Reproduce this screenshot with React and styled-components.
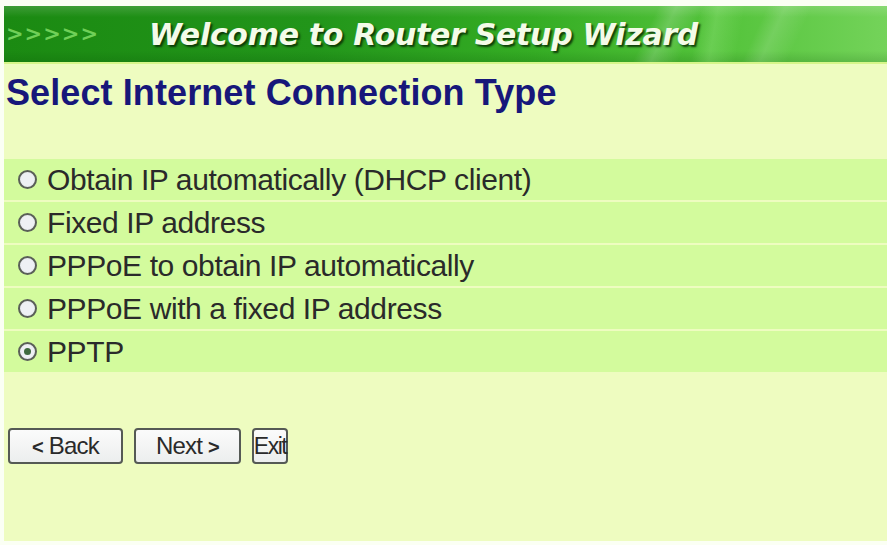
import styled, { createGlobalStyle } from "styled-components";
import { useState } from "react";

const GlobalStyle = createGlobalStyle`
  html, body {
    margin: 0;
    padding: 0;
    background: #ffffff;
  }
`;

const Page = styled.div`
  width: 887px;
  height: 545px;
  box-sizing: border-box;
  padding: 6px 0 4px 4px;
  display: flex;
  flex-direction: column;
  background: #fbfff4;
`;

const Banner = styled.div`
  height: 56px;
  display: flex;
  align-items: center;
  gap: 50px;
  padding-left: 2px;
  border-bottom: 2px solid #d6f58a;
  background:
    linear-gradient(115deg, transparent 0 72%, rgba(255,255,255,0.18) 74%, transparent 77%, transparent 84%, rgba(255,255,255,0.14) 86%, transparent 89%),
    linear-gradient(100deg, transparent 0 78%, rgba(200,255,180,0.2) 80%, transparent 83%),
    linear-gradient(180deg, rgba(255,255,255,0.15) 0, transparent 20%, transparent 80%, rgba(0,60,0,0.15) 100%),
    linear-gradient(90deg, #1b8a12 0%, #22951a 35%, #35ad24 60%, #55c43c 82%, #74d35a 100%);
`;

const Arrows = styled.span`
  font-family: "DejaVu Sans", sans-serif;
  font-weight: bold;
  font-size: 21px;
  letter-spacing: 1px;
  color: #7fdc64;
  opacity: 0.85;
`;

const BannerTitle = styled.h1`
  margin: 0;
  font-family: "DejaVu Sans", Verdana, sans-serif;
  font-style: italic;
  font-weight: bold;
  font-size: 30px;
  letter-spacing: -0.3px;
  color: #f4fbe8;
  text-shadow: 2px 2px 2px rgba(10, 50, 5, 0.9);
`;

const Content = styled.div`
  flex: 1;
  display: flex;
  flex-direction: column;
  background: #eefcc0;
`;

const Heading = styled.h2`
  margin: 0;
  padding: 8px 0 0 2px;
  height: 80px;
  box-sizing: border-box;
  font-family: "Liberation Sans", Arial, sans-serif;
  font-weight: bold;
  font-size: 36px;
  letter-spacing: 0.1px;
  color: #17177a;
`;

const Options = styled.div`
  display: flex;
  flex-direction: column;
  gap: 2px;
  padding-top: 15px;
`;

const Row = styled.label`
  height: 41px;
  display: flex;
  align-items: center;
  gap: 10px;
  padding-left: 14px;
  background: #d3fb9d;
  font-family: "Liberation Sans", Arial, sans-serif;
  font-size: 30px;
  letter-spacing: -0.4px;
  color: #2a2a2a;
  cursor: pointer;
`;

const Radio = styled.span`
  width: 15px;
  height: 15px;
  border-radius: 50%;
  border: 2px solid #5a5f58;
  background: radial-gradient(circle, #eef0f4 0 55%, #d8dde6 100%);
  display: flex;
  align-items: center;
  justify-content: center;
  flex-shrink: 0;

  &::after {
    content: "";
    width: 7px;
    height: 7px;
    border-radius: 50%;
    background: ${(p) => (p.$checked ? "#3e6a3e" : "transparent")};
  }
`;

const Buttons = styled.div`
  display: flex;
  gap: 11px;
  padding: 56px 0 0 4px;
`;

const Button = styled.button`
  height: 36px;
  padding: 0 ${(p) => p.$pad}px;
  border: 2px solid #555a55;
  border-radius: 4px;
  background: linear-gradient(180deg, #fbfbfb 0%, #eceeee 100%);
  font-family: "Liberation Sans", Arial, sans-serif;
  font-size: ${(p) => (p.$tight ? 23 : 24)}px;
  letter-spacing: ${(p) => (p.$tight ? -1.5 : -0.8)}px;
  color: #2a2a2a;
  cursor: pointer;
`;

const Chev = styled.b`
  font-size: 20px;
`;

const options = [
  "Obtain IP automatically (DHCP client)",
  "Fixed IP address",
  "PPPoE to obtain IP automatically",
  "PPPoE with a fixed IP address",
  "PPTP",
];

export default function App() {
  const [selected, setSelected] = useState(4);

  return (
    <>
      <GlobalStyle />
      <Page>
        <Banner>
          <Arrows>&gt;&gt;&gt;&gt;&gt;</Arrows>
          <BannerTitle>Welcome to Router Setup Wizard</BannerTitle>
        </Banner>
        <Content>
          <Heading>Select Internet Connection Type</Heading>
          <Options>
            {options.map((text, i) => (
              <Row key={text} onClick={() => setSelected(i)}>
                <Radio $checked={selected === i} />
                {text}
              </Row>
            ))}
          </Options>
          <Buttons>
            <Button $pad={22}>
              <Chev>&lt;</Chev> Back
            </Button>
            <Button $pad={20}>
              Next <Chev>&gt;</Chev>
            </Button>
            <Button $pad={0} $tight>
              Exit
            </Button>
          </Buttons>
        </Content>
      </Page>
    </>
  );
}
